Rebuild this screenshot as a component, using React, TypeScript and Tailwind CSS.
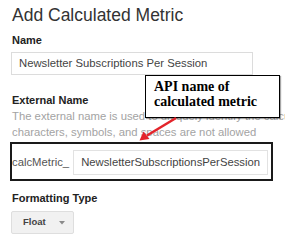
export default function App() {
  return (
    <div className="relative h-[240px] w-[285px] overflow-hidden bg-white font-['Liberation_Sans',Arial,sans-serif]">
      <div className="flex flex-col pl-[11px] pt-[5px]">
        {/* Title */}
        <h1 className="ml-px text-[17.5px] leading-[20px] text-[#333]">Add Calculated Metric</h1>

        {/* Name */}
        <label className="mt-[8px] ml-px text-[11px] leading-[14px] font-bold text-[#222]">Name</label>
        <div className="mt-[5px] flex h-[23px] w-[242px] items-center border border-[#dcdcdc] pl-[7px] text-[11.3px] text-[#444]">
          Newsletter Subscriptions Per Session
        </div>

        {/* External name */}
        <label className="mt-[18px] ml-px text-[11px] leading-[14px] font-bold text-[#222]">External Name</label>
        <p className="mt-[2px] ml-px text-[11.3px] leading-[15.5px] whitespace-nowrap text-[#a3a3a3]">
          The external name is used to uniquely identify the calculated metric. Special
          <br />
          characters, symbols, and spaces are not allowed
        </p>

        <div className="mt-[2px] -ml-px flex h-[39px] w-[263px] items-center border-2 border-[#1a1a1a] pt-[1px] pr-[3px]">
          <span className="text-[11.3px] text-[#555]">calcMetric_</span>
          <div className="ml-[4px] flex h-[25px] flex-1 items-center border border-[#e2e2e2] pl-[7px] text-[11.3px] text-[#444]">
            NewsletterSubscriptionsPerSession
          </div>
        </div>

        {/* Formatting type */}
        <label className="mt-[10px] ml-px text-[11px] leading-[14px] font-bold text-[#222]">Formatting Type</label>
        <div className="mt-[6px] flex h-[23px] w-[63px] items-center rounded-[2px] border border-[#dedede] bg-[#f1f1f1] pl-[11px]">
          <span className="text-[9.5px] font-bold text-[#444]">Float</span>
          <svg className="ml-[13px]" width="6" height="4" viewBox="0 0 6 4">
            <path d="M0 0 L6 0 L3 3.5 Z" fill="#8a8a8a" />
          </svg>
        </div>
      </div>

      {/* Annotation callout */}
      <div className="absolute top-[75px] left-[145px] h-[43px] w-[135px] border border-black bg-white pt-[3px] pl-[8px] shadow-[1px_1px_1px_rgba(0,0,0,0.35)]">
        <p className="font-['Liberation_Serif','Times_New_Roman',serif] text-[14px] leading-[15px] font-bold text-black">
          API name of
          <br />
          calculated metric
        </p>
      </div>

      {/* Red arrow */}
      <svg className="absolute top-0 left-0" width="285" height="240" viewBox="0 0 285 240">
        <line x1="176" y1="118" x2="147" y2="135.5" stroke="#e3242b" strokeWidth="2.6" />
        <path d="M139.5 140.5 L143.5 131.5 L149.5 139 Z" fill="#e3242b" />
      </svg>
    </div>
  );
}
